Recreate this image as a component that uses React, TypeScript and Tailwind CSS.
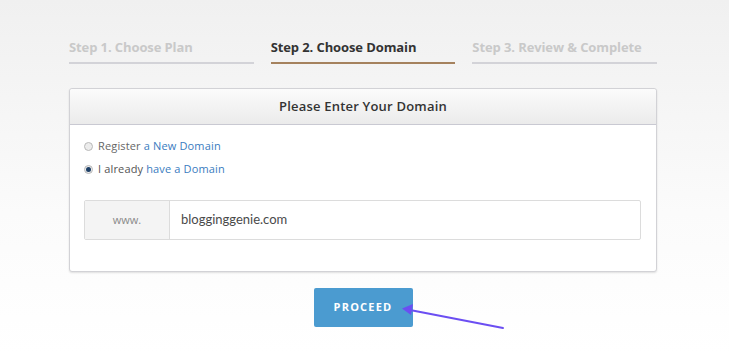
// Domain step of the order flow, with the pointer arrow to "Proceed".
import { useState } from 'react';

const STEPS = [
  { label: 'Step 1. Choose Plan', active: false },
  { label: 'Step 2. Choose Domain', active: true },
  { label: 'Step 3. Review & Complete', active: false },
];

function Radio({ checked }: { checked: boolean }) {
  return (
    <span className="w-[9px] h-[9px] rounded-full border border-[#b9b9b9] bg-[#ececec] flex items-center justify-center shrink-0">
      {checked && <span className="w-[5px] h-[5px] rounded-full bg-[#1d3f66]" />}
    </span>
  );
}

export default function App() {
  const [mode, setMode] = useState<'register' | 'own'>('own');

  return (
    <main
      className="relative w-[729px] h-[354px] overflow-hidden bg-gradient-to-b from-[#f0f0f0] via-[#fbfbfb] via-60% to-white"
      style={{ fontFamily: '"Open Sans", "Liberation Sans", sans-serif' }}
    >
      <div className="ml-[69px] w-[588px] flex flex-col">
        <div className="flex gap-[17px] pt-[38px]">
          {STEPS.map((s) => (
            <div
              key={s.label}
              className={`w-[185px] pb-[6px] border-b-2 text-[13px] leading-[18px] font-bold tracking-[-0.1px] ${
                s.active ? 'border-[#a5825e] text-[#333]' : 'border-[#d3d3d8] text-[#c9c9c9]'
              }`}
            >
              {s.label}
            </div>
          ))}
        </div>

        <div className="mt-[24px] bg-white border border-[#d2d2d6] rounded-[3px] shadow-[0_1px_2px_rgba(0,0,0,0.12)]">
          <div className="h-[36px] flex items-center justify-center bg-gradient-to-b from-[#fbfbfb] to-[#ebebeb] border-b border-[#c9c9d2] rounded-t-[3px] text-[13px] font-semibold text-[#333] tracking-[0.2px]">
            Please Enter Your Domain
          </div>

          <div className="px-[14px] pt-[13px] pb-[31px]">
            <div className="flex flex-col gap-[7px] text-[11px] leading-[16px] tracking-[0.15px]">
              <label className="flex items-center gap-[5px] cursor-pointer" onClick={() => setMode('register')}>
                <Radio checked={mode === 'register'} />
                <span className="text-[#666]">
                  Register <span className="text-[#3a7cc0]">a New Domain</span>
                </span>
              </label>
              <label className="flex items-center gap-[5px] cursor-pointer" onClick={() => setMode('own')}>
                <Radio checked={mode === 'own'} />
                <span className="text-[#555]">
                  I already <span className="text-[#3a7cc0]">have a Domain</span>
                </span>
              </label>
            </div>

            <div className="mt-[23px] flex h-[40px] border border-[#dcdcdc] rounded-[2px] mr-[1px]">
              <div className="w-[85px] flex items-center justify-center bg-[#f4f4f4] border-r border-[#dcdcdc] text-[11px] text-[#8a8a8a]">
                www.
              </div>
              <div className="flex-1 flex items-center pl-[11px] text-[13px] text-[#4a4a4a]" style={{ fontFamily: 'Lato, "Open Sans", sans-serif' }}>
                blogginggenie.com
              </div>
            </div>
          </div>
        </div>

        <div className="mt-[16px] flex justify-center">
          <button className="w-[99px] h-[39px] rounded-[2px] bg-[#4b9bd0] text-white text-[11px] font-bold tracking-[1.2px]">
            PROCEED
          </button>
        </div>
      </div>

      <svg className="absolute left-0 top-0 pointer-events-none" width="729" height="354">
        <line x1="503" y1="328" x2="410" y2="310" stroke="#6b4ef2" strokeWidth="2" strokeLinecap="round" />
        <polygon points="402,308.5 413,304 411,315" fill="#6b4ef2" />
      </svg>
    </main>
  );
}
